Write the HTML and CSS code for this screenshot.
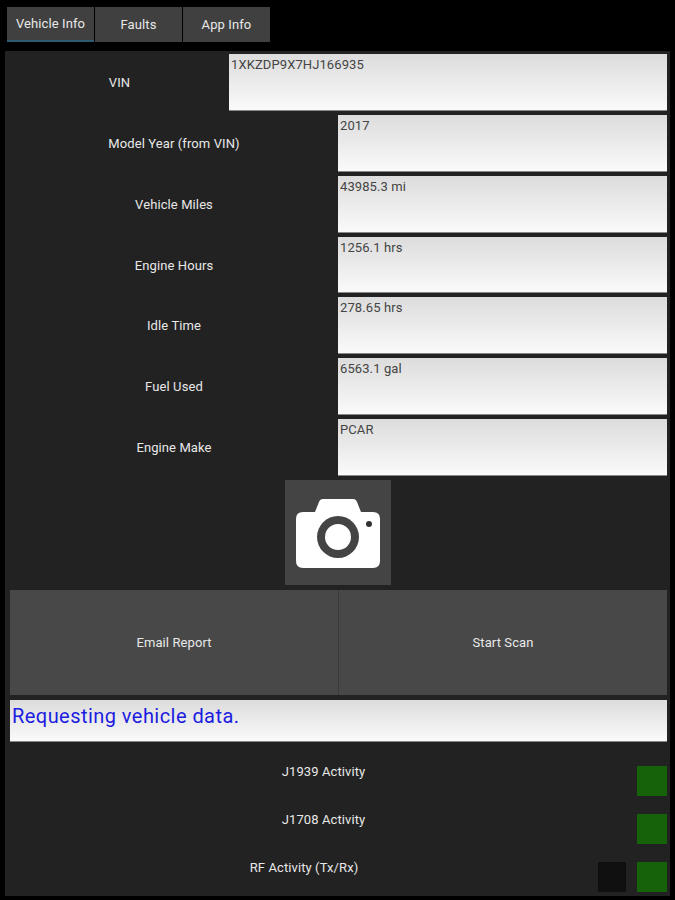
FILE: index.html
```html
<!DOCTYPE html>
<html lang="en">
<head>
  <meta charset="UTF-8">
  <meta name="viewport" content="width=device-width, initial-scale=1.0">
  <title>Vehicle Info</title>
  <link rel="stylesheet" href="styles.css">
</head>
<body>
  <div class="tabs">
    <div class="tab active">Vehicle Info</div>
    <div class="tab">Faults</div>
    <div class="tab">App Info</div>
  </div>

  <div class="panel">
    <div class="rows">
      <div class="row vin-row">
        <div class="label">VIN</div>
        <div class="field">1XKZDP9X7HJ166935</div>
      </div>
      <div class="row">
        <div class="label">Model Year (from VIN)</div>
        <div class="field">2017</div>
      </div>
      <div class="row">
        <div class="label">Vehicle Miles</div>
        <div class="field">43985.3 mi</div>
      </div>
      <div class="row">
        <div class="label">Engine Hours</div>
        <div class="field">1256.1 hrs</div>
      </div>
      <div class="row">
        <div class="label">Idle Time</div>
        <div class="field">278.65 hrs</div>
      </div>
      <div class="row">
        <div class="label">Fuel Used</div>
        <div class="field">6563.1 gal</div>
      </div>
      <div class="row">
        <div class="label">Engine Make</div>
        <div class="field">PCAR</div>
      </div>
    </div>

    <div class="camera-row">
      <button class="camera-btn" aria-label="Take photo">
        <svg width="86" height="72" viewBox="0 0 86 72">
          <path fill="#fff" d="M8 15H20L24 5Q25 2 28 2H58Q61 2 62 5L66 15H78Q85 15 85 22V64Q85 71 78 71H8Q1 71 1 64V22Q1 15 8 15Z"/>
          <circle cx="43" cy="40" r="21" fill="#444"/>
          <circle cx="43" cy="40" r="13" fill="#fff"/>
          <circle cx="74" cy="27" r="3" fill="#333"/>
        </svg>
      </button>
    </div>

    <div class="actions">
      <button class="action">Email Report</button>
      <button class="action">Start Scan</button>
    </div>

    <div class="status">Requesting vehicle data.</div>

    <div class="activity">
      <div class="activity-row">
        <div class="label">J1939 Activity</div>
        <div class="led on"></div>
      </div>
      <div class="activity-row">
        <div class="label">J1708 Activity</div>
        <div class="led on"></div>
      </div>
      <div class="activity-row">
        <div class="label">RF Activity (Tx/Rx)</div>
        <div class="led off"></div>
        <div class="led on"></div>
      </div>
    </div>
  </div>
</body>
</html>
```

FILE: styles.css
```css
body {
  margin: 0;
  height: 900px;
  overflow: hidden;
  background-color: #000;
  color: #e8e8e8;
  font-family: Roboto, "Liberation Sans", sans-serif;
  font-size: 13px;
  letter-spacing: 0.1px;
}

/* tabs */
.tabs {
  display: flex;
  gap: 1px;
  height: 35px;
  padding: 7px 0 0 7px;
}

.tab {
  width: 87px;
  display: flex;
  align-items: center;
  justify-content: center;
  background-color: #404040;
  box-sizing: border-box;
}

.tab.active {
  border-bottom: 2px solid #2f5a70;
}

/* main panel */
.panel {
  width: 665px;
  height: 845px;
  margin: 9px 0 0 5px;
  padding: 3px 3px 0 5px;
  box-sizing: border-box;
  background-color: #222;
}

.rows {
  display: flex;
  flex-direction: column;
  gap: 4px;
  height: 422px;
}

.row {
  flex: 1;
  display: flex;
}

.label {
  flex: 1;
  display: flex;
  align-items: center;
  justify-content: center;
}

.field {
  width: 329px;
  padding: 3px 2px;
  box-sizing: border-box;
  background: linear-gradient(#dcdcdc, #fafafa);
  color: #444;
  border-bottom: 1px solid #888;
}

.vin-row .field {
  width: 438px;
}

/* camera */
.camera-row {
  display: flex;
  justify-content: center;
  padding: 4px 2px 5px 0;
}

.camera-btn {
  width: 106px;
  height: 105px;
  padding: 0;
  border: none;
  background-color: #444;
  display: flex;
  align-items: center;
  justify-content: center;
}

/* buttons */
.actions {
  display: flex;
  gap: 1px;
  height: 105px;
  background-color: #3a3a3a;
}

.action {
  flex: 1;
  border: none;
  padding: 0;
  background-color: #484848;
  color: #e8e8e8;
  font-family: inherit;
  font-size: inherit;
  letter-spacing: inherit;
}

.status {
  height: 42px;
  margin-top: 5px;
  padding: 4px 2px;
  box-sizing: border-box;
  background: linear-gradient(#dcdcdc, #fafafa);
  border-bottom: 1px solid #888;
  color: #1c1ce0;
  font-size: 20px;
  line-height: 24px;
  letter-spacing: 0.45px;
}

/* activity lights */
.activity {
  display: flex;
  flex-direction: column;
  gap: 18px;
  margin-top: 24px;
}

.activity-row {
  display: flex;
  height: 30px;
}

.activity-row .label {
  padding-bottom: 20px;
  box-sizing: border-box;
}

.led {
  width: 30px;
  height: 30px;
}

.led.on {
  background-color: #156208;
}

.led.off {
  background-color: #101010;
  width: 28px;
  margin-right: 11px;
}
```
